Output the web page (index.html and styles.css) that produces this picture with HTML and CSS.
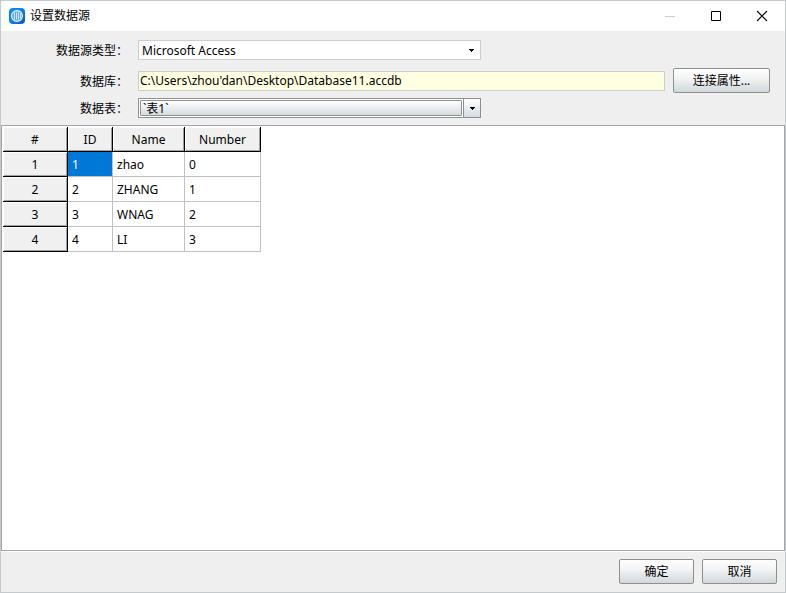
FILE: index.html
```html
<!DOCTYPE html>
<html lang="zh-CN">
<head>
  <meta charset="UTF-8" />
  <meta name="viewport" content="width=device-width, initial-scale=1.0" />
  <title>设置数据源</title>
  <link rel="stylesheet" href="styles.css">
</head>
<body>
  <div class="window">
    <header class="titlebar">
      <svg class="logo" viewBox="0 0 16 16" aria-hidden="true">
        <defs>
          <linearGradient id="logoBlue" x1="0" y1="0" x2="1" y2="1">
            <stop offset="0" stop-color="#0a8cf5" />
            <stop offset="0.5" stop-color="#0a80f5" />
            <stop offset="1" stop-color="#0757bd" />
          </linearGradient>
        </defs>
        <rect width="16" height="16" rx="4" fill="url(#logoBlue)" />
        <circle cx="8" cy="8" r="5.4" fill="#5aa9f7" stroke="#fff" stroke-width="1.1" />
        <path d="M5.5 4.5v7M7.5 4.5v7M9.5 4.5v7M11.5 5.5v5" stroke="#d3e8fd" />
      </svg>
      <h1>设置数据源</h1>
      <div class="window-controls">
        <button type="button" aria-label="最小化" disabled>
          <svg viewBox="0 0 10 10"><path d="M0 5.5h10" stroke="#ccc" /></svg>
        </button>
        <button type="button" aria-label="最大化">
          <svg viewBox="0 0 10 10"><path d="M.5 .5h9v9h-9z" fill="none" stroke="#000" /></svg>
        </button>
        <button type="button" aria-label="关闭">
          <svg viewBox="0 0 10 10"><path d="M0 0l10 10M10 0L0 10" stroke="#000" stroke-width="1.1" /></svg>
        </button>
      </div>
    </header>

    <form class="source-form">
      <div class="field">
        <label for="sourceType">数据源类型：</label>
        <div class="combo">
          <select id="sourceType">
            <option>Microsoft Access</option>
          </select>
          <span class="arrow"><svg viewBox="0 0 5 3"><path d="M0 0h5v1H4v1H3v1H2V2H1V1H0z" /></svg></span>
        </div>
      </div>

      <div class="field field-database">
        <label for="database">数据库：</label>
        <input type="text" id="database" value="C:\Users\zhou'dan\Desktop\Database11.accdb" readonly />
        <button type="button" class="btn btn-connect">连接属性...</button>
      </div>

      <div class="field">
        <label for="dataTable">数据表：</label>
        <div class="combo combo-raised">
          <select id="dataTable">
            <option>`表1`</option>
          </select>
          <span class="arrow"><svg viewBox="0 0 5 3"><path d="M0 0h5v1H4v1H3v1H2V2H1V1H0z" /></svg></span>
        </div>
      </div>
    </form>

    <main class="preview">
      <table>
        <colgroup>
          <col class="col-index"><col class="col-id"><col class="col-name"><col class="col-number">
        </colgroup>
        <thead>
          <tr><th>#</th><th>ID</th><th>Name</th><th>Number</th></tr>
        </thead>
        <tbody>
          <tr><th>1</th><td class="selected">1</td><td>zhao</td><td>0</td></tr>
          <tr><th>2</th><td>2</td><td>ZHANG</td><td>1</td></tr>
          <tr><th>3</th><td>3</td><td>WNAG</td><td>2</td></tr>
          <tr><th>4</th><td>4</td><td>LI</td><td>3</td></tr>
        </tbody>
      </table>
    </main>

    <footer class="actions">
      <button type="button" class="btn">确定</button>
      <button type="button" class="btn">取消</button>
    </footer>
  </div>
</body>
</html>
```

FILE: styles.css
```css
* {
  box-sizing: border-box;
}

body {
  margin: 0;
  font-family: "Noto Sans", "Noto Sans CJK SC", sans-serif;
  font-size: 12px;
  line-height: 16px;
  color: #000;
}

button,
input,
select {
  font: inherit;
  color: inherit;
}

.window {
  display: flex;
  flex-direction: column;
  height: 100vh;
  background: #efefef;
  border: 1px solid #c3c9cd;
}

/* title bar */
.titlebar {
  display: flex;
  align-items: center;
  height: 30px;
  padding-left: 8px;
  background: #fff;
}

.logo {
  width: 16px;
  height: 16px;
  margin-right: 5px;
}

.titlebar h1 {
  margin: 0;
  font-size: 12px;
  font-weight: normal;
}

.window-controls {
  display: flex;
  margin-left: auto;
}

.window-controls button {
  display: flex;
  align-items: center;
  justify-content: center;
  width: 46px;
  height: 30px;
  padding: 0;
  border: none;
  background: none;
}

.window-controls svg {
  width: 10px;
  height: 10px;
  overflow: visible;
}

/* form */
.source-form {
  display: flex;
  flex-direction: column;
  gap: 4px;
  padding: 9px 15px 7px 0;
}

.field {
  display: flex;
  align-items: center;
}

.field label {
  width: 127px;
  margin-right: 10px;
  padding-top: 2px;
  text-align: right;
}

.field-database {
  height: 27px;
  margin-top: 3px;
}

.field-database input {
  flex: 1;
  min-width: 0;
  height: 20px;
  padding: 0 1px;
  border: 1px solid #cdcdcd;
  background: #ffffe1;
  outline: none;
}

.combo {
  display: flex;
  width: 343px;
  height: 20px;
  border: 1px solid #cdcdcd;
  background: #fff;
}

.combo select {
  flex: 1;
  appearance: none;
  padding: 1px 3px 0;
  border: none;
  border-radius: 0;
  background: none;
  outline: none;
}

.arrow {
  display: flex;
  align-items: center;
  justify-content: center;
  width: 17px;
}

.arrow svg {
  width: 5px;
  height: 3px;
}

.combo-raised {
  border-color: #8e8f8f;
}

.combo-raised select {
  margin: 1px;
  padding: 1px 2px 0;
  border: 1px solid #8e8f8f;
  border-radius: 1px;
  background: linear-gradient(#fff, #d5dbde);
  line-height: 14px;
}

.combo-raised .arrow {
  border-left: 1px solid #8e8f8f;
  background: linear-gradient(#fff, #d5dbde);
}

.btn {
  width: 75px;
  height: 25px;
  padding: 1px 0 0;
  border: 1px solid #8e8f8f;
  border-radius: 2px;
  background: linear-gradient(#fff, #f3f4f5 40%, #d1d7da);
}

.btn-connect {
  width: 97px;
  margin-left: 8px;
}

/* data preview */
.preview {
  flex: 1;
  min-height: 0;
  padding: 1px;
  overflow: auto;
  border: 1px solid #a5a5a9;
  background: #fff;
}

table {
  width: 258px;
  table-layout: fixed;
  border-collapse: separate;
  border-spacing: 0;
}

.col-index {
  width: 65px;
}

.col-id {
  width: 45px;
}

.col-name {
  width: 72px;
}

.col-number {
  width: 76px;
}

th,
td {
  height: 25px;
  padding: 2px 4px 0;
  font-weight: normal;
}

th {
  text-align: center;
  border-right: 1px solid #000;
  border-bottom: 1px solid #000;
  background: #f0f0f0;
  box-shadow: inset 1px 1px #fff, inset -1px -1px #a0a0a0;
}

td {
  border-right: 1px solid #c0c0c0;
  border-bottom: 1px solid #c0c0c0;
}

.selected {
  color: #fff;
  background: #0078d7;
}

/* bottom buttons */
.actions {
  display: flex;
  justify-content: flex-end;
  gap: 8px;
  padding: 7px 8px 8px;
  border-top: 1px solid #fff;
}
```
